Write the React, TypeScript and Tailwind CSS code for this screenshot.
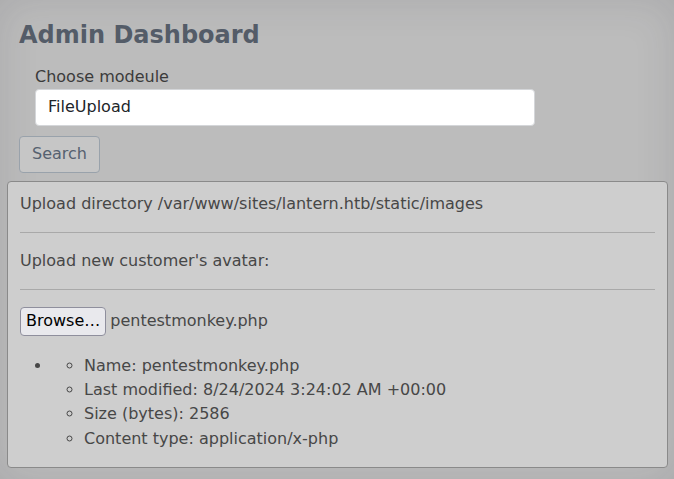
import React from 'react';

const fileInfo = [
  'Name: pentestmonkey.php',
  'Last modified: 8/24/2024 3:24:02 AM +00:00',
  'Size (bytes): 2586',
  'Content type: application/x-php',
];

const App: React.FC = () => {
  return (
    <div
      className="min-h-[479px] w-full bg-[#bcbcbc] shadow-[inset_0_0_40px_rgba(40,45,60,0.12)] pt-[21px] pb-3 text-base leading-6"
      style={{ fontFamily: '"DejaVu Sans", Verdana, sans-serif' }}
    >
      {/* Header + module search */}
      <div className="px-[19px]">
        <h2 className="text-2xl font-bold leading-[28.8px] text-[#545c68]">Admin Dashboard</h2>

        <div className="mt-[15px] ml-4 w-[500px]">
          <label className="block text-[#3b3b3b]">Choose modeule</label>
          <div className="h-[37px] flex items-center bg-white border border-[#d4d6d9] rounded px-3 text-[#212529]">
            FileUpload
          </div>
        </div>

        <button className="mt-[10px] h-[37px] px-3 rounded border border-[#99a2ab] bg-[#c6c6c6] text-[#566170]">
          Search
        </button>
      </div>

      {/* Upload card */}
      <div className="mt-[8px] ml-[7px] mr-[6px] border border-[#8a8a8a] rounded bg-[#cecece] px-3 pt-[10px] text-[#474747]">
        <p className="mb-4">Upload directory /var/www/sites/lantern.htb/static/images</p>
        <hr className="border-0 border-t border-[#a9a9a9] my-4" />
        <p>Upload new customer's avatar:</p>
        <hr className="border-0 border-t border-[#a9a9a9] mt-4 mb-[17px]" />

        <div className="flex items-center h-[29px] gap-[4px]">
          <button className="h-[29px] px-[5px] rounded border border-[#8f8f9d] bg-[#e9e9ed] text-black">
            Browse…
          </button>
          <span>pentestmonkey.php</span>
        </div>

        <ul className="list-disc pl-8 mt-[18px] mb-4 leading-[24.3px]">
          <li>
            <ul className="list-[circle] pl-8">
              {fileInfo.map(item => (
                <li key={item}>{item}</li>
              ))}
            </ul>
          </li>
        </ul>
      </div>
    </div>
  );
};

export default App;
